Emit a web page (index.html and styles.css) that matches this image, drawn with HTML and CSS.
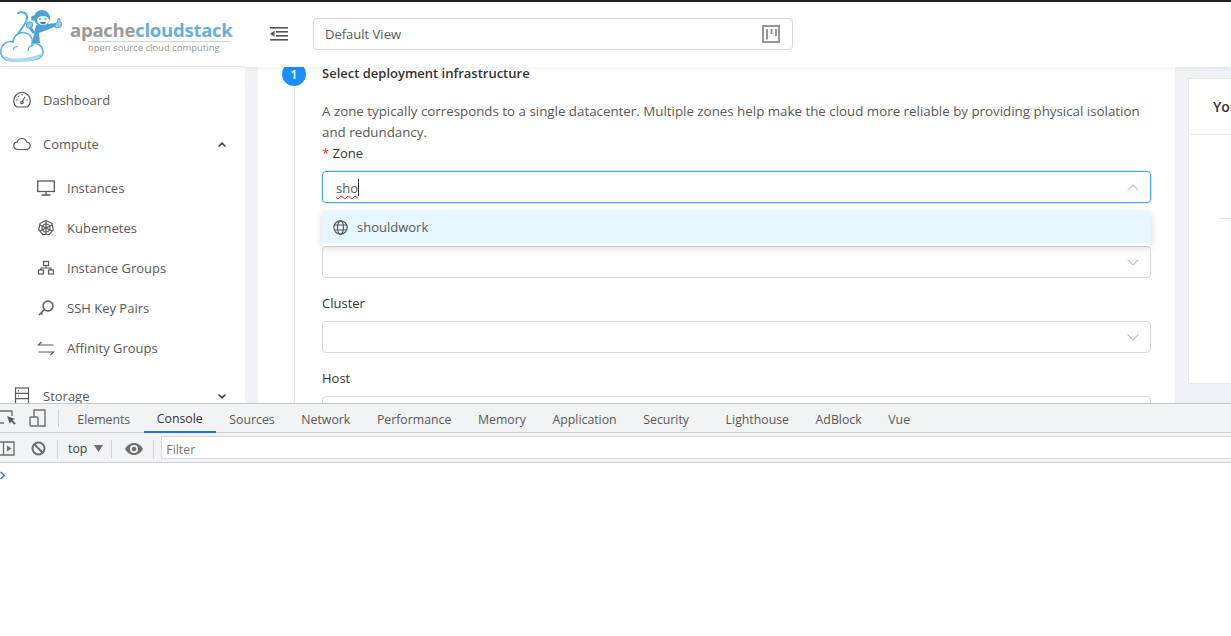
FILE: index.html
```html
<!DOCTYPE html>
<html lang="en">
<head>
<meta charset="utf-8">
<title>Apache CloudStack</title>
<link rel="stylesheet" href="styles.css">
</head>
<body>
<div class="app">
  <header class="topbar">
    <div class="brand">
      <svg class="brand-mark" width="66" height="64" viewBox="0 2 66 64" fill="none">
        <path d="M13 41C17 33 26 26 27 18C27.500 13 22 10.500 17 13.500" stroke="#4fb0e0" stroke-width="2"/>
        <path d="M10 60.500C3 60 0 55 1 50C2 44 8 40 13 42C14 35 20 31 26 33C31 35 33 39 32 44C37 42 43 46 43 52C43 58 36 60 28 60.500Z" fill="#fff" stroke="#58b7e6" stroke-width="1.600"/>
        <path d="M3 55C8 60 25 60 43 53C41 60 30 62 14 62C7 62 4 59 3 55Z" fill="#a9daf3"/>
        <path d="M13 50C14 47 16 46 18 47M28 51C28 47 31 45 34 46" stroke="#58b7e6" stroke-width="1.300"/>
        <path d="M36 25L32 43L40 43L39 33L57 26L56 23Z" fill="#4fa3d4"/>
        <path d="M34 33L29 26" stroke="#4fa3d4" stroke-width="3"/>
        <circle cx="29.500" cy="25" r="3.200" fill="#8ccbea" stroke="#4fa3d4"/>
        <path d="M55 25L57 22L58 18.500L60 19L60 22L62 23L61 27L56 28Z" fill="#8ccbea" stroke="#4fa3d4" stroke-width=".8"/>
        <circle cx="33.500" cy="18" r="2.500" fill="#4fa3d4"/>
        <circle cx="42" cy="18" r="8" fill="#4fa3d4"/>
        <ellipse cx="43" cy="20.500" rx="6" ry="4.500" fill="#eaf6fc"/>
        <path d="M39 19h2M44.500 19h2" stroke="#2f7fae"/>
        <path d="M40 22C41 25 45 25 46 22Z" fill="#2f7fae"/>
      </svg>
      <div class="brand-text">
        <div class="brand-name"><span class="brand-gray">apache</span><span class="brand-blue">cloudstack</span></div>
        <div class="brand-sub">open source cloud computing</div>
      </div>
    </div>
    <div class="top-rest">
      <svg class="collapse" width="18" height="14" viewBox="0 0 18 14" fill="#555">
        <rect x="0" y="0" width="18" height="1.600"/><rect x="6" y="4" width="12" height="1.600"/><rect x="6" y="8" width="12" height="1.600"/><rect x="0" y="12" width="18" height="1.600"/><path d="M0 6.800l4.500-3v6z"/>
      </svg>
      <div class="view-select">
        <span>Default View</span>
        <svg width="18" height="18" viewBox="0 0 18 18" fill="none" stroke="#8c8c8c">
          <rect x="1" y="1" width="16" height="16" stroke-width="1.800"/><path d="M5 4v10.500M9.500 4v5M14 4v7" stroke-width="1.800"/>
        </svg>
      </div>
    </div>
  </header>
  <div class="workspace">
    <nav class="sidebar">
      <div class="nav-item">
        <svg class="nav-ic" viewBox="0 0 18 18" fill="none" stroke="#595959" stroke-width="1.200"><path d="M3.600 16A8.300 8.300 0 1 1 14.400 16z"/><path d="M9 11l3-5M3 9h1.500M13.500 9H15M9 3v1.500M4.800 4.800l1 1"/><circle cx="9" cy="11.500" r="1.200"/></svg>
        <span>Dashboard</span>
      </div>
      <div class="nav-item nav-open">
        <svg class="nav-ic" viewBox="0 0 18 18" fill="none" stroke="#595959" stroke-width="1.200"><path d="M5 14.500C2.800 14.500.8 13 .8 10.800c0-2 1.500-3.400 3.300-3.600C5 5 6.800 3.500 9 3.500s4 1.500 4.900 3.700c1.800.2 3.300 1.600 3.300 3.600 0 2.200-2 3.700-4.200 3.700z"/></svg>
        <span class="nav-label">Compute</span>
        <svg class="nav-caret" width="10" height="7" viewBox="0 0 10 7" fill="#444"><path d="M5 1l4 4-1 1-3-2.500L2 6 1 5z"/></svg>
      </div>
      <div class="nav-sub">
        <svg class="nav-ic" viewBox="0 0 18 18" fill="none" stroke="#595959" stroke-width="1.300"><rect x=".7" y="2" width="16.600" height="10.500"/><path d="M9 12.500v3M4.500 16h9"/></svg>
        <span>Instances</span>
      </div>
      <div class="nav-sub">
        <svg class="nav-ic" viewBox="0 0 18 18" fill="none" stroke="#595959" stroke-width="1.200"><path d="M9 1.500l5.800 2.800 1.500 6.200-4 5H5.700l-4-5 1.500-6.200z"/><circle cx="9" cy="9" r="4"/><path d="M9 2.500v13M3 6l12 6M15 6L3 12"/></svg>
        <span>Kubernetes</span>
      </div>
      <div class="nav-sub">
        <svg class="nav-ic" viewBox="0 0 18 18" fill="none" stroke="#595959" stroke-width="1.200"><rect x="6.500" y="2.500" width="5" height="4"/><rect x="1.500" y="11" width="5" height="4"/><rect x="11.500" y="11" width="5" height="4"/><path d="M9 6.500V9M4 11V9h10v2"/></svg>
        <span>Instance Groups</span>
      </div>
      <div class="nav-sub">
        <svg class="nav-ic" viewBox="0 0 18 18" fill="none" stroke="#595959" stroke-width="1.500"><circle cx="11" cy="7" r="5"/><path d="M7.500 10.500L2 16M4 14l1.500 1.500"/></svg>
        <span>SSH Key Pairs</span>
      </div>
      <div class="nav-sub">
        <svg class="nav-ic" viewBox="0 0 18 18" fill="none" stroke="#595959" stroke-width="1.200"><path d="M16.500 6H1.500l3-3M1.500 13h15l-3 3"/></svg>
        <span>Affinity Groups</span>
      </div>
      <div class="nav-item nav-storage">
        <svg class="nav-ic" viewBox="0 0 18 18" fill="none" stroke="#595959" stroke-width="1.200"><rect x="2.500" y="1" width="13" height="16"/><path d="M2.500 6.300h13M2.500 11.600h13M5 3.600h1M5 9h1"/></svg>
        <span class="nav-label">Storage</span>
        <svg class="nav-caret" width="10" height="7" viewBox="0 0 10 7" fill="#444"><path d="M5 6L1 2l1-1 3 2.500L8 1l1 1z"/></svg>
      </div>
    </nav>
    <main class="content">
      <section class="wizard">
        <div class="step-head">
          <span class="step-num">1</span>
          <h2 class="step-title">Select deployment infrastructure</h2>
        </div>
        <div class="step-body">
          <p class="step-desc">A zone typically corresponds to a single datacenter. Multiple zones help make the cloud more reliable by providing physical isolation and redundancy.</p>
          <div class="field">
            <label class="field-label"><span class="req">*</span> Zone</label>
            <div class="select focused">
              <span class="typed">sho</span><span class="caret-bar"></span>
              <svg class="chev" width="12" height="7" viewBox="0 0 12 7" fill="none" stroke="#bfbfbf" stroke-width="1.100"><path d="M.7 6.300L6 1l5.300 5.300"/></svg>
            </div>
            <div class="dropdown">
              <div class="option">
                <svg width="15" height="15" viewBox="0 0 15 15" fill="none" stroke="#595959" stroke-width="1.200"><circle cx="7.500" cy="7.500" r="6.700"/><ellipse cx="7.500" cy="7.500" rx="3" ry="6.700"/><path d="M1.200 5h12.600M1.200 10h12.600"/></svg>
                <span>shouldwork</span>
              </div>
            </div>
          </div>
          <div class="field">
            <label class="field-label">Pod</label>
            <div class="select"><svg class="chev" width="12" height="7" viewBox="0 0 12 7" fill="none" stroke="#bfbfbf" stroke-width="1.100"><path d="M.7.700L6 6l5.300-5.300"/></svg></div>
          </div>
          <div class="field">
            <label class="field-label">Cluster</label>
            <div class="select"><svg class="chev" width="12" height="7" viewBox="0 0 12 7" fill="none" stroke="#bfbfbf" stroke-width="1.100"><path d="M.7.700L6 6l5.300-5.300"/></svg></div>
          </div>
          <div class="field">
            <label class="field-label">Host</label>
            <div class="select"><svg class="chev" width="12" height="7" viewBox="0 0 12 7" fill="none" stroke="#bfbfbf" stroke-width="1.100"><path d="M.7.700L6 6l5.300-5.300"/></svg></div>
          </div>
        </div>
      </section>
      <aside class="summary">
        <div class="summary-head">Your Instance</div>
        <div class="summary-body"><div class="summary-rule"></div></div>
      </aside>
    </main>
  </div>
</div>
<div class="devtools">
  <div class="dt-tabs">
    <svg class="dt-ic" width="17" height="18" viewBox="0 0 17 18" fill="none" stroke="#6e6e6e" stroke-width="1.400"><path d="M-1 2h13v5M4 14H-1"/><path d="M7 7l8 3-3.500 1.500L10 15z" fill="#5a5a5a" stroke="none"/><path d="M11 11l4 4" stroke="#5a5a5a" stroke-width="1.800"/></svg>
    <svg class="dt-ic dt-ic2" width="18" height="18" viewBox="0 0 18 18" fill="none" stroke="#6e6e6e" stroke-width="1.400"><path d="M5 8V1h11v16H9"/><rect x="1" y="8" width="8" height="9" rx="1"/></svg>
    <span class="dt-sep"></span>
    <span class="dt-tab">Elements</span>
    <span class="dt-tab active">Console</span>
    <span class="dt-tab">Sources</span>
    <span class="dt-tab">Network</span>
    <span class="dt-tab">Performance</span>
    <span class="dt-tab">Memory</span>
    <span class="dt-tab">Application</span>
    <span class="dt-tab">Security</span>
    <span class="dt-tab dt-wide">Lighthouse</span>
    <span class="dt-tab">AdBlock</span>
    <span class="dt-tab">Vue</span>
  </div>
  <div class="dt-bar">
    <svg class="dt-play" width="15" height="15" viewBox="0 0 15 15" fill="none" stroke="#6e6e6e" stroke-width="1.300"><path d="M-1 1h15v13H-1M3.500 1v13"/><path d="M7 4.500l4.500 3-4.500 3z" fill="#6e6e6e" stroke="none"/></svg>
    <svg class="dt-block" width="15" height="15" viewBox="0 0 15 15" fill="none" stroke="#6e6e6e" stroke-width="2"><circle cx="7.500" cy="7.500" r="6"/><path d="M3.300 3.300l8.400 8.400"/></svg>
    <span class="dt-sep sep-a"></span>
    <span class="dt-top">top</span>
    <svg class="dt-tri" width="9" height="7" viewBox="0 0 9 7" fill="#6e6e6e"><path d="M0 0h9L4.500 7z"/></svg>
    <span class="dt-sep sep-b"></span>
    <svg class="dt-eye" width="18" height="12" viewBox="0 0 18 12" fill="#6e6e6e"><path d="M9 0C5 0 2 2.500 0 6c2 3.500 5 6 9 6s7-2.500 9-6c-2-3.500-5-6-9-6zm0 10a4 4 0 1 1 0-8 4 4 0 0 1 0 8z"/><circle cx="9" cy="6" r="2.300"/></svg>
    <span class="dt-sep sep-c"></span>
    <div class="dt-filter">Filter</div>
  </div>
  <div class="dt-console">
    <svg class="dt-prompt" width="6" height="9" viewBox="0 0 6 9" fill="none" stroke="#3b78e7" stroke-width="1.600"><path d="M.6 1l3.700 3.500L.6 8"/></svg>
  </div>
</div>
</body>
</html>
```
FILE: styles.css
```css
* { box-sizing: border-box; }
html, body { margin: 0; padding: 0; height: 100%; overflow: hidden; background: #fff; }
body { font-family: "Open Sans", "Noto Sans", sans-serif; font-size: 13px; color: #595959; display: flex; flex-direction: column; height: 636px; }

.app { height: 403px; flex: none; display: flex; flex-direction: column; overflow: hidden; border-top: 2px solid #1d1d1d; background: #f0f2f5; }

.topbar { height: 65px; flex: none; display: flex; background: #fff; position: relative; z-index: 2; box-shadow: 0 1px 4px rgba(0,21,41,.08); }
.brand { width: 245px; flex: none; display: flex; align-items: flex-start; border-bottom: 1px solid #e8e8e8; }
.brand-mark { flex: none; }
.brand-text { margin-left: 4px; padding-top: 17px; }
.brand-name { font-weight: 700; font-size: 18.600px; line-height: 21px; letter-spacing: -.3px; white-space: nowrap; }
.brand-gray { color: #9a9a9a; }
.brand-blue { color: #6aafd8; }
.brand-sub { font-size: 9.500px; line-height: 12px; color: #9a9a9a; border-top: 1px solid #cfd6da; white-space: nowrap; margin: 1px 3px 0 18px; }
.top-rest { flex: 1; display: flex; align-items: flex-start; padding: 16px 0 0 25px; }
.collapse { margin-top: 9px; flex: none; }
.view-select { width: 480px; height: 32px; margin-left: 25px; border: 1px solid #d9d9d9; border-radius: 4px; display: flex; align-items: center; justify-content: space-between; padding: 0 12px 0 11px; font-size: 13px; color: #595959; }

.workspace { flex: 1; display: flex; min-height: 0; }
.sidebar { width: 245px; flex: none; background: #fff; padding-top: 11px; overflow: hidden; }
.nav-item, .nav-sub { display: flex; align-items: center; height: 40px; font-size: 13px; color: #595959; white-space: nowrap; }
.nav-item { padding-left: 13px; height: 44px; }
.nav-open { margin-bottom: 2px; }
.nav-sub { padding-left: 37px; }
.nav-ic { width: 18px; height: 18px; flex: none; margin-right: 12px; }
.nav-label { flex: 1; }
.nav-caret { margin-right: 18px; flex: none; }
.nav-storage { margin-top: 6px; }

.content { flex: 1; min-width: 0; display: flex; gap: 13px; padding-left: 13px; overflow: hidden; }
.wizard { width: 917px; flex: none; background: #fff; padding: 0 24px; height: 420px; }
.step-head { display: flex; align-items: center; height: 24px; margin-top: -5px; position: relative; z-index: 1; }
.step-num { width: 24px; height: 24px; border-radius: 50%; background: #1890ff; color: #fff; font-size: 12px; font-weight: 600; display: flex; align-items: center; justify-content: center; flex: none; }
.step-title { margin: 0 0 2px 16px; font-size: 13px; font-weight: 600; color: #333; line-height: 20px; white-space: nowrap; }
.step-body { margin-left: 12px; padding-left: 27px; border-left: 1px solid #e8e8e8; padding-top: 15px; }
.step-desc { margin: 0; font-size: 13.330px; line-height: 21px; color: #595959; }
.field { height: 75px; position: relative; }
.field-label { display: block; height: 28px; line-height: 21px; font-size: 13px; color: #333; }
.req { color: #f5222d; }
.select { height: 32px; border: 1px solid #d9d9d9; border-radius: 4px; display: flex; align-items: center; padding-left: 13px; position: relative; font-size: 13px; color: #595959; }
.select.focused { border-color: #40a9ff; box-shadow: 0 0 0 1px rgba(24,144,255,.18); padding-top: 1px; }
.typed { text-decoration: underline wavy #e02020 1px; text-underline-offset: 2px; }
.caret-bar { width: 1px; height: 17px; background: #333; }
.chev { position: absolute; right: 11px; top: 12px; }
.dropdown { position: absolute; top: 68px; left: 0; right: 0; height: 35px; background: #fff; border-radius: 4px; box-shadow: 0 2px 8px rgba(0,0,0,.15); z-index: 3; }
.option { height: 32px; background: #e6f7ff; display: flex; align-items: center; gap: 9px; padding-left: 11px; font-size: 13px; color: #595959; }

.summary { flex: 1; min-width: 0; align-self: flex-start; margin-top: 11px; height: 306px; background: #fff; border: 1px solid #e8e8e8; border-right: 0; }
.summary-head { height: 56px; padding-left: 24px; display: flex; align-items: center; font-size: 14px; font-weight: 600; color: #333; border-bottom: 1px solid #e8e8e8; white-space: nowrap; overflow: hidden; }
.summary-body { padding: 83px 0 0 30px; }
.summary-rule { height: 1px; background: #e8e8e8; }

.devtools { flex: 1; display: flex; flex-direction: column; min-height: 0; background: #fff; border-top: 1px solid #c8c9cc; position: relative; z-index: 4; }
.dt-tabs { height: 29px; flex: none; display: flex; align-items: stretch; background: #f1f3f4; border-bottom: 1px solid #cbcdd1; font-size: 12.300px; color: #5a5a5a; }
.dt-ic { align-self: center; flex: none; }
.dt-ic2 { margin-left: 12px; }
.dt-sep { width: 1px; height: 18px; background: #cfd1d4; flex: none; align-self: center; }
.dt-tabs .dt-sep { margin-left: 11px; margin-right: 5px; }
.dt-tab { padding: 2px 13.300px 0; display: flex; align-items: center; white-space: nowrap; }
.dt-tab.active { color: #333; border-bottom: 2px solid #1a73e8; margin-bottom: -1px; }
.dt-wide { margin-left: 10px; }
.dt-bar { height: 30px; flex: none; display: flex; align-items: center; padding-top: 2px; background: #f1f3f4; border-bottom: 1px solid #cbcdd1; font-size: 12.300px; color: #333; }
.dt-play { flex: none; }
.dt-block { margin-left: 16px; flex: none; }
.sep-a { margin: 0 10px 0 11px; }
.sep-b { margin: 0 13px 0 8px; }
.sep-c { margin: 0 7px 0 10px; }
.dt-top { color: #444; }
.dt-tri { margin-left: 7px; flex: none; }
.dt-eye { flex: none; }
.dt-filter { flex: 1; height: 23px; align-self: flex-start; margin-top: 1px; background: #fff; border: 1px solid #d8d9db; border-right: 0; padding: 3px 0 0 4px; line-height: 19px; color: #757575; }
.dt-console { flex: 1; padding-top: 8px; }
.dt-prompt { display: block; }
```
